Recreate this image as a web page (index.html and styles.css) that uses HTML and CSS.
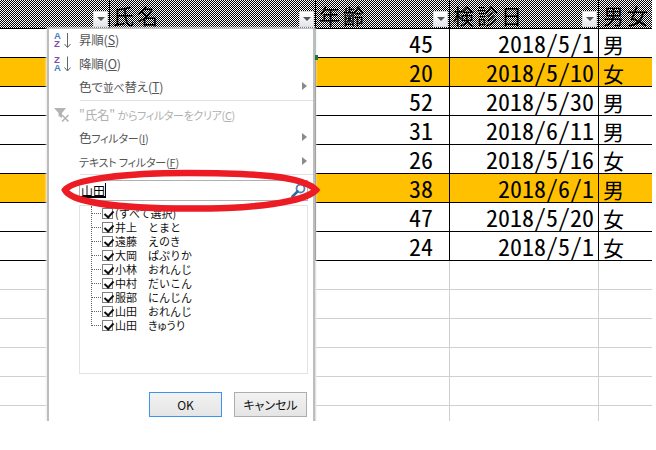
FILE: index.html
```html
<!DOCTYPE html>
<html lang="ja">
<head>
<meta charset="utf-8">
<title>フィルター</title>
<link rel="stylesheet" href="styles.css">
</head>
<body>
<div class="sheet">
  <div class="row head">
    <div class="cell a"><span class="fbtn"></span></div>
    <div class="cell b"><span class="title">氏名</span><span class="fbtn"></span></div>
    <div class="cell c"><span class="title">年齢</span><span class="fbtn"></span></div>
    <div class="cell d"><span class="title">検診日</span><span class="fbtn"></span></div>
    <div class="cell e"><span class="title">男女</span></div>
  </div>
  <div class="row"><div class="cell a"></div><div class="cell b sel"></div><div class="cell c num">45</div><div class="cell d num">2018/5/1</div><div class="cell e">男</div></div>
  <div class="row hl"><div class="cell a"></div><div class="cell b"></div><div class="cell c num">20</div><div class="cell d num">2018/5/10</div><div class="cell e">女</div></div>
  <div class="row"><div class="cell a"></div><div class="cell b"></div><div class="cell c num">52</div><div class="cell d num">2018/5/30</div><div class="cell e">男</div></div>
  <div class="row"><div class="cell a"></div><div class="cell b"></div><div class="cell c num">31</div><div class="cell d num">2018/6/11</div><div class="cell e">男</div></div>
  <div class="row"><div class="cell a"></div><div class="cell b"></div><div class="cell c num">26</div><div class="cell d num">2018/5/16</div><div class="cell e">女</div></div>
  <div class="row hl"><div class="cell a"></div><div class="cell b"></div><div class="cell c num">38</div><div class="cell d num">2018/6/1</div><div class="cell e">男</div></div>
  <div class="row"><div class="cell a"></div><div class="cell b"></div><div class="cell c num">47</div><div class="cell d num">2018/5/20</div><div class="cell e">女</div></div>
  <div class="row"><div class="cell a"></div><div class="cell b"></div><div class="cell c num">24</div><div class="cell d num">2018/5/1</div><div class="cell e">女</div></div>
  <div class="row empty"><div class="cell a"></div><div class="cell b"></div><div class="cell c"></div><div class="cell d"></div><div class="cell e"></div></div>
  <div class="row empty"><div class="cell a"></div><div class="cell b"></div><div class="cell c"></div><div class="cell d"></div><div class="cell e"></div></div>
  <div class="row empty"><div class="cell a"></div><div class="cell b"></div><div class="cell c"></div><div class="cell d"></div><div class="cell e"></div></div>
  <div class="row empty"><div class="cell a"></div><div class="cell b"></div><div class="cell c"></div><div class="cell d"></div><div class="cell e"></div></div>
  <div class="row empty"><div class="cell a"></div><div class="cell b"></div><div class="cell c"></div><div class="cell d"></div><div class="cell e"></div></div>
  <div class="row empty"><div class="cell a"></div><div class="cell b"></div><div class="cell c"></div><div class="cell d"></div><div class="cell e"></div></div>

  <div class="popup">
    <div class="mi">
      <svg class="ico" width="18" height="20" viewBox="0 0 18 20"><text x="0" y="9" class="az blue">A</text><text x="0" y="17" class="az purple">Z</text><path d="M13.5 3v14M10.500 14l3 3.500 3-3.500" class="arr"/></svg>
      <span>昇順(<u>S</u>)</span>
    </div>
    <div class="mi">
      <svg class="ico" width="18" height="20" viewBox="0 0 18 20"><text x="0" y="8.500" class="az purple">Z</text><text x="0" y="16.500" class="az blue">A</text><path d="M13.5 2.500v14M10.500 13.500l3 3.500 3-3.500" class="arr"/></svg>
      <span>降順(<u>O</u>)</span>
    </div>
    <div class="mi sub"><span>色で<span class="narrow">並べ</span>替え(<u>T</u>)</span></div>
    <div class="sep"></div>
    <div class="mi off">
      <svg class="ico" width="18" height="20" viewBox="0 0 18 20"><path d="M0 3h12L8 8v5L4.500 11V8z" fill="#b4b4b4"/><path d="M8 10l6.500 6.500M14.500 10L8 16.500" stroke="#b4b4b4" stroke-width="1.600" fill="none"/></svg>
      <span>"氏名" <span class="narrow tighter">からフィルターをクリア(<u>C</u>)</span></span>
    </div>
    <div class="mi sub"><span>色<span class="narrow">フィルター(<u>I</u>)</span></span></div>
    <div class="mi sub"><span class="narrow">テキスト フィルター(<u>F</u>)</span></div>
    <div class="sep"></div>
    <div class="search">
      <span class="query">山田</span><span class="caret"></span>
      <svg class="lens" width="15" height="15" viewBox="0 0 15 15"><circle cx="9.500" cy="5.500" r="4" fill="#fff" stroke="#4d82b8" stroke-width="1.800"/><path d="M6.500 8.500L1.500 13.500" stroke="#2f69a5" stroke-width="2.600" stroke-linecap="round"/></svg>
    </div>
    <div class="list">
      <div class="li first"><span class="cb"></span><span>(すべて選択)</span></div>
      <div class="li"><span class="cb"></span><span>井上　とまと</span></div>
      <div class="li"><span class="cb"></span><span>遠藤　えのき</span></div>
      <div class="li"><span class="cb"></span><span>大岡　ぱぷりか</span></div>
      <div class="li"><span class="cb"></span><span>小林　おれんじ</span></div>
      <div class="li"><span class="cb"></span><span>中村　だいこん</span></div>
      <div class="li"><span class="cb"></span><span>服部　にんじん</span></div>
      <div class="li"><span class="cb"></span><span>山田　おれんじ</span></div>
      <div class="li last"><span class="cb"></span><span>山田　<span class="tight">きゅうり</span></span></div>
    </div>
    <div class="btns">
      <span class="btn ok">OK</span>
      <span class="btn cancel">キャンセル</span>
    </div>
  </div>

  <span class="handle"></span>
  <svg class="mark" width="270" height="50" viewBox="0 0 270 50"><path d="M10 23C18 12 72 6 132 6C200 6 248 9 261 23C250 35 200 42 132 41.500C62 41.500 16 35 10 23Z" fill="none" stroke="#ed1c24" stroke-width="6.500"/></svg>
</div>
</body>
</html>
```

FILE: styles.css
```css
* { box-sizing: border-box; }
html, body { margin: 0; padding: 0; background: #fff; }
body { width: 656px; height: 450px; overflow: hidden; font-family: "Noto Sans CJK JP", sans-serif; }

.sheet { position: relative; width: 652px; height: 421px; overflow: hidden; background: #fff; display: flex; flex-direction: column; }

.row { flex: none; height: 29px; display: grid; grid-template-columns: 110px 206px 134px 149px 53px; font-size: 24px; line-height: 28px; color: #000; font-feature-settings: "hwid"; }
.cell { border-right: 1px solid #000; border-bottom: 1px solid #000; padding: 0 2px; white-space: nowrap; overflow: hidden; position: relative; }
.cell.e { border-right: 0; font-size: 21px; padding-left: 4px; padding-top: 1px; }
.cell.num { text-align: right; padding-right: 4px; }
.cell.c.num { padding-right: 16px; }
.hl { background: #ffc000; }
.empty .cell { border-color: #d0d0d0; }
.head { background: conic-gradient(#000 25%, #fff 0 50%, #000 0 75%, #fff 0) 0 0 / 2px 2px; }
.head .cell { display: flex; justify-content: space-between; align-items: flex-end; padding-right: 1px; }
.head .title { font-size: 21px; letter-spacing: 3px; line-height: 26px; margin-bottom: 0; }
.cell.b .title { margin-left: 1px; }
.cell.c .title { margin-left: 1px; }
.cell.d .title { margin-left: 1px; }
.cell.e .title { margin-left: 0; }
.cell.sel { border-right-color: #217346; }

.fbtn { flex: none; margin-left: auto; margin-bottom: 1px; width: 15px; height: 16px; background: linear-gradient(#fff, #e4e6ea); border: 1px solid #d5d8dd; display: flex; align-items: center; justify-content: center; }
.fbtn::after { content: ""; border: 4px solid transparent; border-top: 4px solid #555; border-bottom: 0; }

.handle { position: absolute; left: 315px; top: 55px; width: 3px; height: 5px; background: #217346; }

.popup { position: absolute; left: 47px; top: 28px; width: 268px; height: 393px; background: #fff; border: solid #bdbdbd; border-width: 1px 2px 0; box-shadow: 1px 0 2px #e6e6e6, -1px 0 2px #eee; font-size: 12.500px; color: #555; display: flex; flex-direction: column; }

.mi { flex: none; height: 23.500px; padding-left: 30px; line-height: 23.500px; position: relative; white-space: nowrap; font-feature-settings: "palt"; letter-spacing: -0.200px; }
.mi:first-child { margin-top: -1px; }
.mi u { text-decoration-thickness: 1px; text-underline-offset: 1px; }
.narrow { font-size: 11px; }
.tighter { letter-spacing: -0.350px; }
.ico { position: absolute; left: 5px; top: 2px; }
.az { font-family: "Liberation Sans", sans-serif; font-size: 9.500px; font-weight: 700; }
.blue { fill: #3f7fc1; }
.purple { fill: #7f4aa8; }
.arr { fill: none; stroke: #666; stroke-width: 1; }
.sub::after { content: ""; position: absolute; right: 6px; top: 7px; border: 4px solid transparent; border-left: 5px solid #8a8a8a; border-right: 0; }
.off { color: #b0b0b0; }
.sep { flex: none; height: 1px; margin: 1px 0 2px 31px; background: #dfe1e4; }

.search { flex: none; margin: 3px 5px 0 30px; height: 21px; border: solid #b0b0b0; border-width: 1px; display: flex; align-items: center; padding-left: 1px; position: relative; font-size: 12px; color: #000; }
.query { line-height: 16px; border-bottom: 2px solid #000; height: 15px; }
.caret { width: 1px; height: 15px; background: #000; }
.lens { position: absolute; right: 1px; top: 2px; }

.list { flex: none; margin: 4px 5px 0 30px; height: 169px; border: 1px solid #e3e3e3; padding: 0 0 0 11px; font-size: 11px; color: #111; }
.li { height: 14px; line-height: 14px; display: flex; align-items: center; gap: 2px; white-space: nowrap; position: relative; padding-left: 11px; }
.li::before { content: ""; position: absolute; left: 0; top: -7px; height: 14px; width: 11px; border-left: 1px dotted #666; border-bottom: 1px dotted #666; }
.li.first::before { top: 0; height: 7px; }
.tight { font-feature-settings: "palt"; }
.cb { flex: none; width: 11px; height: 11px; border: 1px solid #808080; background: #fff; position: relative; }
.cb::after { content: ""; position: absolute; left: 3px; top: 0; width: 4px; height: 7px; border: solid #111; border-width: 0 2px 2px 0; transform: rotate(42deg); }

.btns { flex: none; margin: 18px 6px 0 0; display: flex; justify-content: flex-end; gap: 12px; }
.btn { width: 73px; height: 25px; border: 1px solid #adadad; background: linear-gradient(#f2f2f2, #e5e5e5); color: #111; font-size: 12px; line-height: 23px; text-align: center; }
.btn.ok { border-color: #3a94f0; }
.btn.cancel { font-feature-settings: "palt"; }

.mark { position: absolute; left: 55px; top: 167px; }
```
